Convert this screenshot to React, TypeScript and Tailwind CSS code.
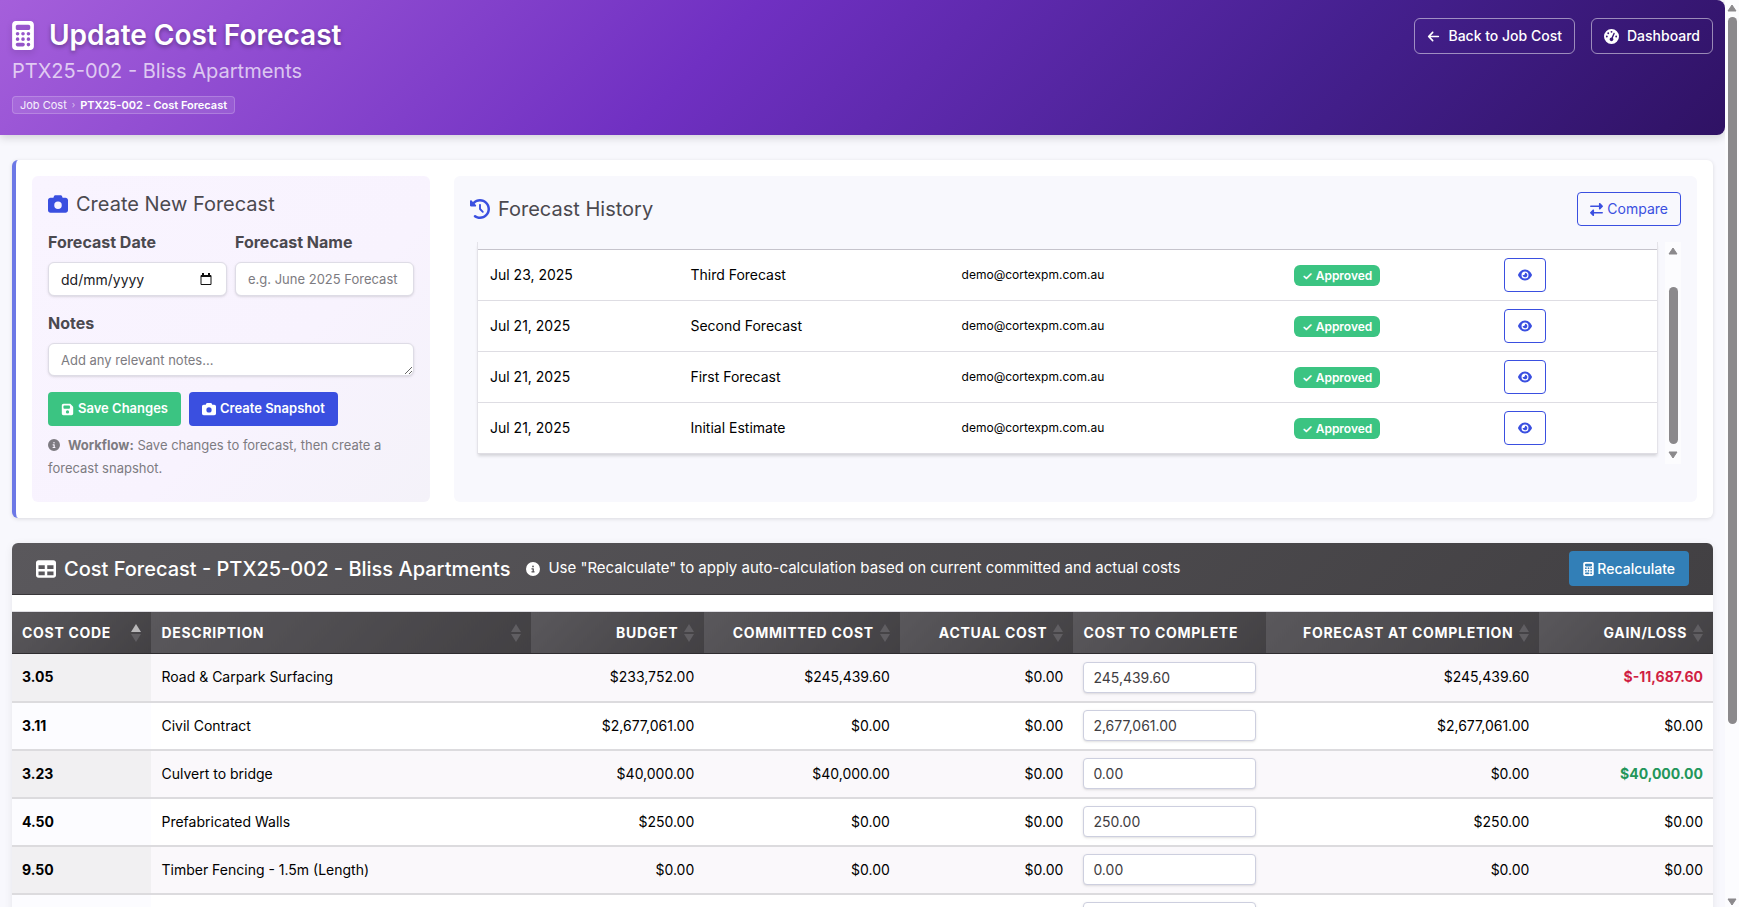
import type { ReactNode } from "react";
import {
    FaArrowLeft,
    FaCalculator,
    FaCamera,
    FaCircleInfo,
    FaClockRotateLeft,
    FaEye,
    FaFloppyDisk,
    FaGaugeHigh,
    FaRightLeft,
    FaTable,
} from "react-icons/fa6";

type CostRow = {
    code: string;
    description: string;
    budget: string;
    committed: string;
    actual: string;
    toComplete: string;
    atCompletion: string;
    gainLoss: string;
};

const HISTORY = [
    { date: "Jul 23, 2025", name: "Third Forecast" },
    { date: "Jul 21, 2025", name: "Second Forecast" },
    { date: "Jul 21, 2025", name: "First Forecast" },
    { date: "Jul 21, 2025", name: "Initial Estimate" },
];

const ROWS: CostRow[] = [
    {
        code: "3.05",
        description: "Road & Carpark Surfacing",
        budget: "$233,752.00",
        committed: "$245,439.60",
        actual: "$0.00",
        toComplete: "245,439.60",
        atCompletion: "$245,439.60",
        gainLoss: "$-11,687.60",
    },
    {
        code: "3.11",
        description: "Civil Contract",
        budget: "$2,677,061.00",
        committed: "$0.00",
        actual: "$0.00",
        toComplete: "2,677,061.00",
        atCompletion: "$2,677,061.00",
        gainLoss: "$0.00",
    },
    {
        code: "3.23",
        description: "Culvert to bridge",
        budget: "$40,000.00",
        committed: "$40,000.00",
        actual: "$0.00",
        toComplete: "0.00",
        atCompletion: "$0.00",
        gainLoss: "$40,000.00",
    },
    {
        code: "4.50",
        description: "Prefabricated Walls",
        budget: "$250.00",
        committed: "$0.00",
        actual: "$0.00",
        toComplete: "250.00",
        atCompletion: "$250.00",
        gainLoss: "$0.00",
    },
    {
        code: "9.50",
        description: "Timber Fencing - 1.5m (Length)",
        budget: "$0.00",
        committed: "$0.00",
        actual: "$0.00",
        toComplete: "0.00",
        atCompletion: "$0.00",
        gainLoss: "$0.00",
    },
    // next row only peeks in at the fold
    {
        code: "",
        description: "",
        budget: "",
        committed: "",
        actual: "",
        toComplete: "",
        atCompletion: "",
        gainLoss: "",
    },
];

const COLUMNS = [
    { label: "Cost Code", width: "w-[8.2%]", align: "left", sort: "asc" },
    { label: "Description", width: "w-[22.3%]", align: "left", sort: "none" },
    { label: "Budget", width: "w-[10.2%]", align: "right", sort: "none" },
    { label: "Committed Cost", width: "w-[11.5%]", align: "right", sort: "none" },
    { label: "Actual Cost", width: "w-[10.2%]", align: "right", sort: "none" },
    { label: "Cost to Complete", width: "w-[11.3%]", align: "left", sort: null },
    { label: "Forecast at Completion", width: "w-[16.1%]", align: "right", sort: "none" },
    { label: "Gain/Loss", width: "w-[10.2%]", align: "right", sort: "none" },
];

const gainLossClass = (value: string) => {
    if (value.startsWith("$-")) return "font-bold text-[#d01f43]";
    if (value === "$0.00") return "";
    return "font-bold text-[#23965a]";
};

const SortArrows = ({ active }: { active: boolean }) => (
    <svg width="10" height="18" viewBox="0 0 10 18" className="shrink-0">
        <path d="M5 0L10 8H0Z" fill={active ? "#b9b8ba" : "#605e62"} />
        <path d="M0 10H10L5 18Z" fill="#605e62" />
    </svg>
);

const ScrollArrow = ({ down = false }: { down?: boolean }) => (
    <svg
        width="10"
        height="8"
        viewBox="0 0 10 8"
        className={down ? "shrink-0 rotate-180" : "shrink-0"}
    >
        <path d="M5 1L9 7H1Z" fill="#8b898c" stroke="#8b898c" strokeLinejoin="round" />
    </svg>
);

const PanelTitle = ({ icon, children }: { icon: ReactNode; children: ReactNode }) => (
    <h2 className="flex items-center gap-2 text-xl text-[#4b494f]">
        <span className="text-[#3a4fe0]">{icon}</span>
        {children}
    </h2>
);

const PageHeader = () => (
    <header className="flex min-h-[135px] items-start justify-between rounded-r-lg bg-[linear-gradient(135deg,#a55fdb_0%,#7030c2_41%,#45208f_74%,#2f1264_100%)] px-3 pt-[18px] text-white shadow-[0_3px_8px_rgba(0,0,0,0.15)]">
        <div>
            <h1 className="flex items-center gap-[15px] text-[28px] leading-[34px] font-semibold [text-shadow:0_2px_4px_rgba(0,0,0,0.35)]">
                <FaCalculator size={29} className="w-[22px] drop-shadow-md" />
                Update Cost Forecast
            </h1>
            <p className="mt-1 text-xl leading-[30px] text-white/70">
                PTX25-002 - Bliss Apartments
            </p>
            <nav
                aria-label="Breadcrumb"
                className="mt-[10px] inline-flex items-center gap-[5px] rounded-sm border border-white/20 bg-white/10 px-[7px] text-[11px] leading-4"
            >
                <a href="#job-cost" className="text-white/90">
                    Job Cost
                </a>
                <span className="text-[9px] text-white/60">›</span>
                <span className="font-semibold">PTX25-002 - Cost Forecast</span>
            </nav>
        </div>
        <div className="flex gap-4 text-sm font-medium">
            <a
                href="#job-cost"
                className="flex h-9 items-center gap-2 rounded-md border border-white/50 px-3"
            >
                <FaArrowLeft size={13} />
                Back to Job Cost
            </a>
            <a
                href="#dashboard"
                className="flex h-9 items-center gap-2 rounded-md border border-white/50 px-3"
            >
                <FaGaugeHigh size={15} />
                Dashboard
            </a>
        </div>
    </header>
);

const CreateForecast = () => (
    <section className="w-[398px] shrink-0 rounded-md bg-[linear-gradient(135deg,#f9f4ff_0%,#f8f3fe_60%,#f4f2f9_100%)] px-4 pt-[14px] pb-[22px]">
        <PanelTitle icon={<FaCamera size={20} />}>Create New Forecast</PanelTitle>
        <form>
            <div className="mt-3 grid grid-cols-2 gap-2">
                <div>
                    <label
                        htmlFor="forecast-date"
                        className="mb-2 block text-base font-bold text-[#4b494f]"
                    >
                        Forecast Date
                    </label>
                    <div className="relative">
                        <input
                            id="forecast-date"
                            type="text"
                            placeholder="dd/mm/yyyy"
                            className="h-[34px] w-full rounded-md border border-[#dedce6] bg-white px-3 text-sm shadow-sm placeholder:text-[#212024]"
                        />
                        <svg
                            viewBox="0 0 12 12"
                            className="absolute top-[11px] right-[15px] size-3"
                            fill="none"
                            stroke="#111"
                        >
                            <path d="M1 2.5H11V11.5H1Z" />
                            <path d="M1 3H11M3 0V2M9 0V2" strokeWidth="2" />
                        </svg>
                    </div>
                </div>
                <div>
                    <label
                        htmlFor="forecast-name"
                        className="mb-2 block text-base font-bold text-[#4b494f]"
                    >
                        Forecast Name
                    </label>
                    <input
                        id="forecast-name"
                        type="text"
                        placeholder="e.g. June 2025 Forecast"
                        className="h-[34px] w-full rounded-md border border-[#dedce6] bg-white px-3 text-[13px] shadow-sm placeholder:text-[#7d7b81]"
                    />
                </div>
            </div>
            <label
                htmlFor="notes"
                className="mt-[15px] mb-2 block text-base font-bold text-[#4b494f]"
            >
                Notes
            </label>
            <textarea
                id="notes"
                rows={1}
                placeholder="Add any relevant notes..."
                className="block h-[33px] w-full resize-y overflow-hidden rounded-md border border-[#dedce6] bg-white px-3 py-1 text-[13px] leading-6 shadow-sm placeholder:text-[#7d7b81]"
            />
            <div className="mt-4 flex gap-2 text-[13px] font-semibold text-white">
                <button
                    type="button"
                    className="flex h-[34px] items-center gap-1 rounded-sm bg-[#3bc482] px-[13px]"
                >
                    <FaFloppyDisk size={13} />
                    Save Changes
                </button>
                <button
                    type="button"
                    className="flex h-[34px] items-center gap-1 rounded-sm bg-[#3a4fe0] px-[13px]"
                >
                    <FaCamera size={14} />
                    Create Snapshot
                </button>
            </div>
            <p className="mt-2 text-[13px] leading-[23px] text-[#7d7b81]">
                <FaCircleInfo size={12} className="mr-2 inline align-[-1px]" />
                <strong>Workflow:</strong> Save changes to forecast, then create a forecast
                snapshot.
            </p>
        </form>
    </section>
);

const ForecastHistory = () => (
    <section className="min-w-0 flex-1 rounded-md bg-[#f8f8fd] p-4">
        <div className="flex items-center justify-between">
            <PanelTitle icon={<FaClockRotateLeft size={20} />}>Forecast History</PanelTitle>
            <button
                type="button"
                className="flex h-[34px] items-center gap-1 rounded-sm border border-[#3a4fe0] px-3 text-sm text-[#3a4fe0]"
            >
                <FaRightLeft size={13} />
                Compare
            </button>
        </div>
        <div className="mt-4 flex h-[222px]">
            <div className="ml-[7px] h-[212px] flex-1 border-x border-[#e4e3e9] pt-[7px] shadow-[0_3px_3px_-1px_rgba(0,0,0,0.15)]">
                <table className="w-full table-fixed border-collapse border-t border-[#c6c4cc] bg-white text-sm">
                    <tbody>
                        {HISTORY.map((item) => (
                            <tr key={item.name} className="h-[51px] border-b border-[#dedde3]">
                                <td className="w-[17%] px-3">{item.date}</td>
                                <td className="w-[23%] px-3">{item.name}</td>
                                <td className="w-[28.2%] px-3 text-xs">demo@cortexpm.com.au</td>
                                <td className="w-[17.8%] px-3">
                                    <span className="inline-block rounded-md bg-[#3bc482] px-2 text-xs leading-[21px] font-semibold text-white">
                                        ✓ Approved
                                    </span>
                                </td>
                                <td className="px-3">
                                    <button
                                        type="button"
                                        aria-label={`View ${item.name}`}
                                        className="flex h-[34px] w-[42px] items-center justify-center rounded-sm border border-[#3a4fe0] text-[#3a4fe0]"
                                    >
                                        <FaEye size={14} />
                                    </button>
                                </td>
                            </tr>
                        ))}
                    </tbody>
                </table>
            </div>
            <div className="ml-[7px] flex w-4 flex-col items-center bg-[#fcfcfe] py-[5px]">
                <ScrollArrow />
                <div className="mt-8 w-[9px] flex-1 rounded-full bg-[#8b898c]" />
                <div className="mt-[7px] flex">
                    <ScrollArrow down />
                </div>
            </div>
        </div>
    </section>
);

const CostTable = () => (
    <section className="mt-[25px] rounded-t-md bg-white shadow-[0_2px_8px_rgba(0,0,0,0.08)]">
        <div className="flex h-[52px] items-center rounded-t-md border-b border-[#39373a] bg-[linear-gradient(135deg,#5a585c,#424043)] pr-6 pl-6 text-white">
            <h2 className="flex items-center gap-2 text-xl font-medium">
                <FaTable size={20} />
                Cost Forecast - PTX25-002 - Bliss Apartments
            </h2>
            <p className="ml-4 flex items-center gap-2 text-[15px]">
                <FaCircleInfo size={14} />
                Use "Recalculate" to apply auto-calculation based on current committed and actual
                costs
            </p>
            <button
                type="button"
                className="ml-auto flex h-[35px] items-center gap-[3px] rounded-sm bg-[#327fb7] px-[14px] text-sm font-medium"
            >
                <FaCalculator size={14} className="w-[11px]" />
                Recalculate
            </button>
        </div>
        <table className="mt-4 w-full table-fixed border-collapse border-t border-[#dedde3] text-sm">
            <thead>
                <tr className="h-[42px] text-white uppercase">
                    {COLUMNS.map((col) => (
                        <th
                            key={col.label}
                            className={`${col.width} border-b border-[#2f2d30] bg-[linear-gradient(135deg,#5a585c,#424043)] px-[10px] font-bold tracking-wider`}
                        >
                            <span
                                className={`flex items-center gap-[6px] whitespace-nowrap ${
                                    col.align === "right" ? "justify-end" : "justify-between"
                                }`}
                            >
                                {col.label}
                                {col.sort && <SortArrows active={col.sort === "asc"} />}
                            </span>
                        </th>
                    ))}
                </tr>
            </thead>
            <tbody>
                {ROWS.map((row, i) => (
                    <tr
                        key={i}
                        className="h-12 border-b-2 border-[#dcdbde] text-right odd:bg-[#faf8fb] [&>td]:px-[10px]"
                    >
                        <td
                            className={`text-left font-bold ${
                                i % 2 === 0 ? "bg-[#f1f0f2]" : "bg-[#fcfcff]"
                            }`}
                        >
                            {row.code}
                        </td>
                        <td className="text-left">{row.description}</td>
                        <td>{row.budget}</td>
                        <td>{row.committed}</td>
                        <td>{row.actual}</td>
                        <td>
                            <input
                                type="text"
                                aria-label={`Cost to complete ${row.code}`}
                                defaultValue={row.toComplete}
                                className="block h-[31px] w-full rounded-sm border border-[#cdcfdf] bg-white px-[9px] text-sm text-[#3f3d42] shadow-sm"
                            />
                        </td>
                        <td>{row.atCompletion}</td>
                        <td className={gainLossClass(row.gainLoss)}>{row.gainLoss}</td>
                    </tr>
                ))}
            </tbody>
        </table>
    </section>
);

export default function App() {
    return (
        <div className="flex h-screen overflow-hidden bg-[#f8f8fd] font-['Inter',sans-serif] text-black">
            <div className="min-w-0 flex-1 overflow-hidden">
                <PageHeader />
                <main className="px-3 pt-[25px]">
                    <div className="flex gap-6 rounded-md border-l-4 border-[#6c78e6] bg-white p-4 shadow-[0_1px_4px_rgba(0,0,0,0.12)]">
                        <CreateForecast />
                        <ForecastHistory />
                    </div>
                    <CostTable />
                </main>
            </div>
            <div className="flex w-[14px] flex-col items-center bg-[#fcfcfe] pt-1 pb-px">
                <ScrollArrow />
                <div className="mt-[5px] w-[9px] flex-[706] rounded-full bg-[#8b898c]" />
                <div className="flex-[174]" />
                <ScrollArrow down />
            </div>
        </div>
    );
}
